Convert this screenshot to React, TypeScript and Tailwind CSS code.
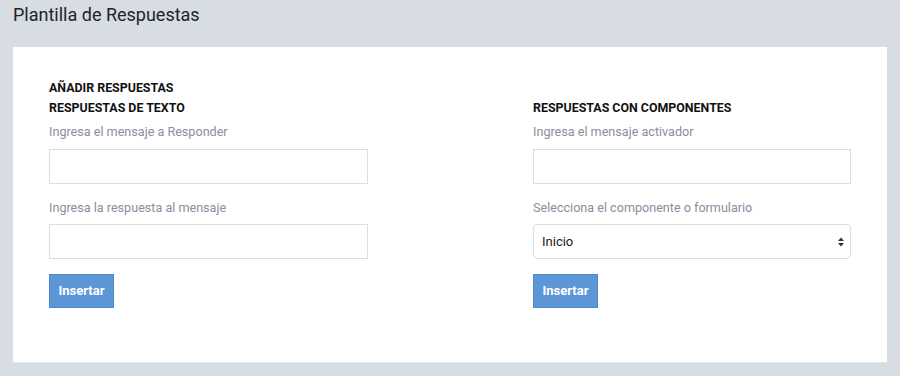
export default function App() {
  const font = { fontFamily: "Roboto, 'Liberation Sans', sans-serif" };
  return (
    <div className="w-[900px] h-[376px] bg-[#d8dce3] overflow-hidden" style={font}>
      <div className="h-[47px] pl-[13px] pt-[3px]">
        <h1 className="text-[18px] leading-6 text-[#1c2331]">Plantilla de Respuestas</h1>
      </div>
      <div className="mx-[13px] h-[316px] bg-white border-b border-[#e3e6ea] px-[36px] pt-[33px]">
        <div className="flex justify-between">
          <div className="w-[319px] flex flex-col">
            <h2 className="text-[12.4px] leading-4 font-bold text-[#111]">AÑADIR RESPUESTAS</h2>
            <h3 className="mt-[4px] text-[12.4px] leading-4 font-bold text-[#111]">RESPUESTAS DE TEXTO</h3>
            <label className="mt-[7px] text-[12.6px] leading-[18px] text-[#8a8e9e]">Ingresa el mensaje a Responder</label>
            <input className="mt-[8px] h-[35px] w-full border border-[#dedede] outline-none" />
            <label className="mt-[15px] text-[12.6px] leading-[18px] text-[#8a8e9e]">Ingresa la respuesta al mensaje</label>
            <input className="mt-[7px] h-[35px] w-full border border-[#dedede] outline-none" />
            <button className="mt-[15px] w-[65px] h-[34px] bg-[#5d96d6] border border-[#4f89cb] text-white text-[13px] font-bold">Insertar</button>
          </div>
          <div className="w-[318px] flex flex-col pt-[20px]">
            <h3 className="text-[12.4px] leading-4 font-bold text-[#111]">RESPUESTAS CON COMPONENTES</h3>
            <label className="mt-[7px] text-[12.6px] leading-[18px] text-[#8a8e9e]">Ingresa el mensaje activador</label>
            <input className="mt-[8px] h-[35px] w-full border border-[#dedede] outline-none" />
            <label className="mt-[15px] text-[12.6px] leading-[18px] text-[#8a8e9e]">Selecciona el componente o formulario</label>
            <div className="mt-[7px] h-[35px] w-full border border-[#dedede] rounded-[4px] flex items-center justify-between pl-[8px] pr-[6px]">
              <span className="text-[13px] text-[#222]">Inicio</span>
              <svg width="6" height="10" viewBox="0 0 6 10">
                <path d="M0 4 L3 0.5 L6 4 Z" fill="#333" />
                <path d="M0 6 L3 9.5 L6 6 Z" fill="#333" />
              </svg>
            </div>
            <button className="mt-[15px] w-[65px] h-[34px] bg-[#5d96d6] border border-[#4f89cb] text-white text-[13px] font-bold">Insertar</button>
          </div>
        </div>
      </div>
    </div>
  );
}
